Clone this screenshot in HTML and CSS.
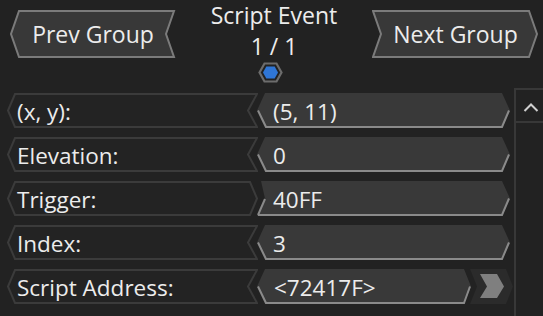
FILE: index.html
```html
<!DOCTYPE html>
<html>
<head>
    <meta charset="UTF-8">
    <title>Script Event</title>
    <link rel="stylesheet" href="styles.css">
</head>
<body>
    <div id="wrapper">
        <div class="top">
            <div class="navButton prevButton">
                <svg class="shape" width="166" height="48" viewBox="0 0 166 48">
                    <polygon points="9,1 164,1 156,24 164,47 9,47 1,24" fill="#383838" stroke="#7b7b7b" stroke-width="2"/>
                </svg>
                <span class="navText">Prev Group</span>
            </div>
            <div class="eventTitle">
                <div class="titleLine">Script Event</div>
                <div class="titleLine">1 / 1</div>
                <svg class="hexIcon" width="25" height="21" viewBox="0 0 25 21">
                    <polygon points="6.5,1.5 18.5,1.5 23.5,10.5 18.5,19.5 6.5,19.5 1.5,10.5" fill="#222" stroke="#6c6c6c" stroke-width="2.2"/>
                    <polygon points="8.3,4.6 16.7,4.6 20,10.5 16.7,16.4 8.3,16.4 5,10.5" fill="#2f76d6"/>
                </svg>
            </div>
            <div class="navButton nextButton">
                <svg class="shape" width="167" height="48" viewBox="0 0 167 48">
                    <polygon points="1,1 157,1 165,24 157,47 1,47 9,24" fill="#383838" stroke="#7b7b7b" stroke-width="2"/>
                </svg>
                <span class="navText">Next Group</span>
            </div>
        </div>

        <div class="main">
            <div class="rows">
                <div class="row">
                    <div class="label">
                        <svg class="shape" width="251" height="35" viewBox="0 0 251 35">
                            <polygon points="8,1 250,1 241,17.5 250,34 8,34 1,17.5" fill="#232323" stroke="#3b3b3b" stroke-width="2"/>
                        </svg>
                        <span class="fieldText">(x, y):</span>
                    </div>
                    <div class="value">
                        <svg class="shape" width="254" height="35" viewBox="0 0 254 35">
                            <polygon points="0,17.5 8,0 245,0 253,17.5 245,35 8,35" fill="#393939"/>
                            <polyline points="1,17.5 9,34 245,34 252,17.5" fill="none" stroke="#8a8a8a" stroke-width="2"/>
                        </svg>
                        <span class="fieldText">(5, 11)</span>
                    </div>
                </div>
                <div class="row">
                    <div class="label">
                        <svg class="shape" width="251" height="35" viewBox="0 0 251 35">
                            <polygon points="8,1 250,1 241,17.5 250,34 8,34 1,17.5" fill="#232323" stroke="#3b3b3b" stroke-width="2"/>
                        </svg>
                        <span class="fieldText">Elevation:</span>
                    </div>
                    <div class="value">
                        <svg class="shape" width="254" height="35" viewBox="0 0 254 35">
                            <polygon points="0,17.5 8,0 245,0 253,17.5 245,35 8,35" fill="#393939"/>
                            <polyline points="1,17.5 9,34 245,34 252,17.5" fill="none" stroke="#8a8a8a" stroke-width="2"/>
                        </svg>
                        <span class="fieldText">0</span>
                    </div>
                </div>
                <div class="row">
                    <div class="label">
                        <svg class="shape" width="251" height="35" viewBox="0 0 251 35">
                            <polygon points="8,1 243,1 250,17.5 243,34 8,34 1,17.5" fill="#232323" stroke="#3b3b3b" stroke-width="2"/>
                        </svg>
                        <span class="fieldText">Trigger:</span>
                    </div>
                    <div class="value">
                        <svg class="shape" width="254" height="35" viewBox="0 0 254 35">
                            <polygon points="4,0 245,0 253,17.5 245,35 0,35 8,17.5" fill="#393939"/>
                            <polyline points="1,34 245,34 252,17.5" fill="none" stroke="#8a8a8a" stroke-width="2"/>
                            <line x1="1" y1="34" x2="8" y2="18" stroke="#8a8a8a" stroke-width="2"/>
                        </svg>
                        <span class="fieldText">40FF</span>
                    </div>
                </div>
                <div class="row">
                    <div class="label">
                        <svg class="shape" width="251" height="35" viewBox="0 0 251 35">
                            <polygon points="8,1 250,1 241,17.5 250,34 8,34 1,17.5" fill="#232323" stroke="#3b3b3b" stroke-width="2"/>
                        </svg>
                        <span class="fieldText">Index:</span>
                    </div>
                    <div class="value">
                        <svg class="shape" width="254" height="35" viewBox="0 0 254 35">
                            <polygon points="0,17.5 8,0 245,0 253,17.5 245,35 8,35" fill="#393939"/>
                            <polyline points="1,17.5 9,34 245,34 252,17.5" fill="none" stroke="#8a8a8a" stroke-width="2"/>
                        </svg>
                        <span class="fieldText">3</span>
                    </div>
                </div>
                <div class="row">
                    <div class="label">
                        <svg class="shape" width="251" height="35" viewBox="0 0 251 35">
                            <polygon points="8,1 250,1 241,17.5 250,34 8,34 1,17.5" fill="#232323" stroke="#3b3b3b" stroke-width="2"/>
                        </svg>
                        <span class="fieldText">Script Address:</span>
                    </div>
                    <div class="value shortValue">
                        <svg class="shape" width="215" height="35" viewBox="0 0 215 35">
                            <polygon points="0,17.5 8,0 207,0 214,17.5 207,35 8,35" fill="#393939"/>
                            <polyline points="1,17.5 9,34 207,34 213,17.5" fill="none" stroke="#8a8a8a" stroke-width="2"/>
                        </svg>
                        <span class="fieldText addressText">&lt;72417F&gt;</span>
                    </div>
                    <div class="gotoButton">
                        <svg width="43" height="35" viewBox="0 0 43 35">
                            <polygon points="0,0 36,0 43,17.5 36,35 0,35 7,17.5" fill="#2b2b2b"/>
                            <polygon points="10,5 27,5 34,17.5 27,29 10,29 17,17.5" fill="#7f7f7f"/>
                        </svg>
                    </div>
                </div>
            </div>
            <div class="scrollbar">
                <div class="scrollUp">
                    <svg width="28" height="32" viewBox="0 0 28 32">
                        <polyline points="8.5,21 15,14.5 21.5,21" fill="none" stroke="#cfcfcf" stroke-width="2"/>
                    </svg>
                </div>
            </div>
        </div>
    </div>
</body>
</html>
```

FILE: styles.css
```css
body {
    margin: 0;
    padding: 0;
    background-color: #222222;
    color: #ececec;
    font-family: "Open Sans", "Noto Sans", sans-serif;
    overflow: hidden;
}

#wrapper {
    width: 543px;
    height: 316px;
}

.top {
    display: flex;
    height: 88px;
    padding-left: 10px;
    padding-right: 4px;
    box-sizing: border-box;
}

.navButton {
    position: relative;
    margin-top: 10px;
    height: 48px;
    display: flex;
    align-items: center;
    justify-content: center;
}

.prevButton {
    width: 166px;
}

.nextButton {
    width: 167px;
}

.shape {
    position: absolute;
    left: 0;
    top: 0;
}

.navText {
    position: relative;
    font-size: 23px;
}

.eventTitle {
    flex: 1;
    text-align: center;
    font-size: 23px;
    line-height: 31px;
}

.hexIcon {
    display: block;
    margin: 0 auto;
    position: relative;
    left: -4px;
}

.main {
    display: flex;
}

.rows {
    width: 514px;
    padding-top: 5px;
}

.row {
    display: flex;
    height: 35px;
    margin-bottom: 9px;
    padding-left: 7px;
}

.label {
    position: relative;
    width: 251px;
    height: 35px;
}

.value {
    position: relative;
    width: 254px;
    height: 35px;
    margin-left: -1px;
}

.shortValue {
    width: 215px;
}

.fieldText {
    position: relative;
    display: block;
    font-size: 22.5px;
    line-height: 35px;
    padding-top: 1px;
    padding-left: 10px;
    white-space: nowrap;
}

.value .fieldText {
    padding-left: 16px;
}

.value .addressText {
    padding-left: 17px;
}

.gotoButton {
    height: 35px;
    margin-left: -2px;
}

.gotoButton svg {
    display: block;
}

.scrollbar {
    width: 29px;
    height: 228px;
    border-left: 2px solid #383838;
    border-top: 2px solid #383838;
    box-sizing: border-box;
}

.scrollUp {
    height: 33px;
    border-bottom: 2px solid #383838;
    box-sizing: border-box;
}

.scrollUp svg {
    display: block;
}
```
